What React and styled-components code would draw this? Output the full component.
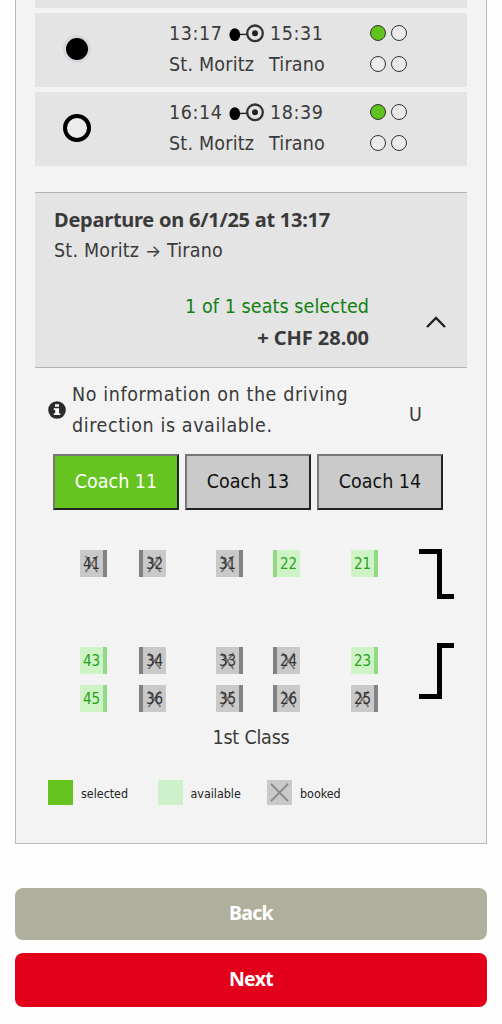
import { useState } from "react";
import styled, { createGlobalStyle } from "styled-components";

const connections = [
  { id: 1, from: "13:17", to: "15:31" },
  { id: 2, from: "16:14", to: "18:39" },
];

const coaches = ["Coach 11", "Coach 13", "Coach 14"];

const upperSeats = [
  { n: 41, back: "right" },
  { n: 32, back: "left" },
  { n: 31, back: "right" },
  { n: 22, back: "left", free: true },
  { n: 21, back: "right", free: true },
];

const lowerSeats = [
  { n: 43, back: "right", free: true },
  { n: 34, back: "left" },
  { n: 33, back: "right" },
  { n: 24, back: "left" },
  { n: 23, back: "right", free: true },
  { n: 45, back: "right", free: true },
  { n: 36, back: "left" },
  { n: 35, back: "right" },
  { n: 26, back: "left" },
  { n: 25, back: "right" },
];

function Route() {
  return (
    <RouteIcon viewBox="0 0 36 20">
      <path d="M6 10.4H18" stroke="#222" strokeWidth="1.4" />
      <ellipse cx="5.8" cy="10.7" rx="5.4" ry="6.4" fill="#000" />
      <circle cx="26" cy="9.3" r="7.8" fill="none" stroke="#333" strokeWidth="2.3" />
      <circle cx="26" cy="9.3" r="3" fill="#222" />
    </RouteIcon>
  );
}

function Cross() {
  return (
    <CrossIcon viewBox="0 0 20 20">
      <path d="M1 1L19 19M19 1L1 19" stroke="#858585" strokeWidth="1.8" />
    </CrossIcon>
  );
}

function Seats({ seats, lower }) {
  return (
    <SeatGrid $lower={lower}>
      {seats.map((seat) => (
        <Seat key={seat.n} $back={seat.back} $free={seat.free}>
          {!seat.free && (
            <SeatCross viewBox="0 0 14 18">
              <path d="M1 1L13 17M13 1L1 17" stroke="#777" strokeWidth="1.8" />
            </SeatCross>
          )}
          <SeatNumber>{seat.n}</SeatNumber>
        </Seat>
      ))}
    </SeatGrid>
  );
}

export default function App() {
  const [connection, setConnection] = useState(1);
  const [coach, setCoach] = useState("Coach 11");

  return (
    <Page>
      <GlobalStyle />
      <Panel>
        <Sliver />
        {connections.map((c) => (
          <Connection key={c.id} onClick={() => setConnection(c.id)}>
            <Radio $checked={connection === c.id} />
            <Times>
              <TimeLine>
                <Time>{c.from}</Time>
                <Route />
                <Time>{c.to}</Time>
              </TimeLine>
              <Stations>
                <Station>St. Moritz</Station>
                <Station>Tirano</Station>
              </Stations>
            </Times>
            <Occupancy>
              <Dot $full />
              <Dot />
              <Dot />
              <Dot />
            </Occupancy>
          </Connection>
        ))}

        <Departure>
          <Title>Departure on 6/1/25 at 13:17</Title>
          <Station>
            St. Moritz <Arrow>→</Arrow> Tirano
          </Station>
          <Summary>
            <Chosen>1 of 1 seats selected</Chosen>
            <Price>+ CHF 28.00</Price>
          </Summary>
          <Chevron viewBox="0 0 22 14">
            <path d="M2 12L11 3L20 12" fill="none" stroke="#222" strokeWidth="2.4" />
          </Chevron>
        </Departure>

        <Notice>
          <InfoIcon viewBox="0 0 18 18">
            <circle cx="9" cy="9" r="8.8" fill="#2b2b2b" />
            <path d="M7 3.2h4v2.6H7zM5.8 7.2H11v5h1.3V14H5.8v-1.8H7.2V9H5.8z" fill="#fff" />
          </InfoIcon>
          <NoticeText>
            No information on the driving
            <br />
            direction is available.
          </NoticeText>
          <span>U</span>
        </Notice>

        <Coaches>
          {coaches.map((name) => (
            <CoachButton key={name} $active={coach === name} onClick={() => setCoach(name)}>
              {name}
            </CoachButton>
          ))}
        </Coaches>

        <Deck>
          <Seats seats={upperSeats} />
          <Door viewBox="0 0 35 50" $height="50px">
            <path d="M0 2.5H20.5V47.5H35" fill="none" stroke="#000" strokeWidth="5" />
          </Door>
        </Deck>
        <Deck $lower>
          <Seats seats={lowerSeats} lower />
          <Door viewBox="0 0 35 56" $height="56px">
            <path d="M0 53.5H20.5V2.5H35" fill="none" stroke="#000" strokeWidth="5" />
          </Door>
        </Deck>
        <ClassName>1st Class</ClassName>

        <Legend>
          <Swatch $color="#67c420" />
          <LegendText>selected</LegendText>
          <Swatch $color="#cdf2c9" />
          <LegendText>available</LegendText>
          <Swatch $color="#c9c9c9">
            <Cross />
          </Swatch>
          <LegendText>booked</LegendText>
        </Legend>
      </Panel>

      <Action $color="#b0af9b" $height="52px">
        Back
      </Action>
      <Action $color="#e2001a" $height="54px">
        Next
      </Action>
    </Page>
  );
}

const GlobalStyle = createGlobalStyle`
  * {
    box-sizing: border-box;
  }
  body {
    margin: 0;
    background-color: #fefefe;
    color: #3a3a3a;
    font-family: "DejaVu Sans Condensed", "Noto Sans", sans-serif;
    font-size: 19.5px;
    letter-spacing: 0.6px;
    line-height: 30.6px;
  }
  button {
    font-family: inherit;
    letter-spacing: inherit;
    padding: 0;
    cursor: pointer;
  }
  svg {
    display: block;
    flex-shrink: 0;
  }
`;
const Page = styled.div`
  height: 1024px;
  padding: 0 15px;
  overflow: hidden;
  white-space: nowrap;
`;
const Panel = styled.div`
  height: 844px;
  margin-bottom: 44px;
  padding: 0 19px;
  background-color: #f3f3f3;
  border: 1px solid #b9b9b9;
  border-top: none;
`;
const Sliver = styled.div`
  height: 8px;
  margin-bottom: 5px;
  background-color: #e4e4e4;
`;
const Connection = styled.div`
  height: 74px;
  margin-bottom: 5px;
  padding-left: 28px;
  display: flex;
  background-color: #e4e4e4;
`;
const Radio = styled.span`
  width: 28px;
  height: 28px;
  margin: 21.5px 78px 0 0;
  border-radius: 50%;
  border: ${(p) => (p.$checked ? "3.5px solid #d5d9de" : "4px solid #000")};
  background-color: ${(p) => (p.$checked ? "#000" : "#ececec")};
`;
const Times = styled.div`
  width: 201px;
  padding-top: 6px;
`;
const TimeLine = styled.div`
  height: 30.5px;
  display: flex;
`;
const Time = styled.span`
  width: 60px;
`;
const RouteIcon = styled.svg`
  width: 36px;
  height: 20px;
  margin: 5px 5px 0 0;
`;
const Stations = styled.div`
  display: flex;
  justify-content: space-between;
  width: 156px;
`;
const Station = styled.span`
  letter-spacing: 0.2px;
`;
const Occupancy = styled.div`
  display: grid;
  grid-template-columns: 16px 16px;
  grid-auto-rows: 16px;
  gap: 14.5px 5px;
  padding-top: 12px;
`;
const Dot = styled.span`
  border: 1px solid #333;
  border-radius: 50%;
  background-color: ${(p) => (p.$full ? "#60c31e" : "#ebebeb")};
`;
const Departure = styled.section`
  height: 176px;
  margin-top: 26px;
  padding: 12px 19px 0;
  display: grid;
  grid-template-columns: 315px 1fr;
  grid-template-rows: 31px 31px 1fr;
  background-color: #e4e4e4;
  border-top: 1px solid #b5b5b5;
  border-bottom: 1px solid #b5b5b5;

  > span,
  > h2 {
    grid-column: 1 / -1;
  }
`;
const Title = styled.h2`
  margin: 0;
  font-family: "Noto Sans", sans-serif;
  font-size: 20px;
  font-weight: 700;
  letter-spacing: -0.25px;
  line-height: 29px;
`;
const Arrow = styled.span`
  font-family: "Inter", sans-serif;
  font-size: 17px;
  letter-spacing: 0;
`;
const Summary = styled.div`
  padding-top: 25px;
  display: flex;
  flex-direction: column;
  align-items: flex-end;
`;
const Chosen = styled.span`
  color: #118011;
  letter-spacing: 0.08px;
`;
const Price = styled.strong`
  font-family: "Noto Sans", sans-serif;
  font-size: 20px;
  letter-spacing: -0.05px;
  line-height: 29px;
`;
const Chevron = styled.svg`
  width: 22px;
  height: 14px;
  margin: 48px 0 0 56px;
`;
const Notice = styled.div`
  height: 86px;
  padding: 12px 0 0 13px;
  display: flex;

  > span:last-child {
    padding-top: 20px;
  }
`;
const InfoIcon = styled.svg`
  width: 18px;
  height: 18px;
  margin: 21px 6px 0 0;
`;
const NoticeText = styled.p`
  width: 337px;
  margin: 0;
`;
const Coaches = styled.div`
  padding-left: 18px;
  display: flex;
  gap: 6px;
`;
const CoachButton = styled.button`
  width: 126px;
  height: 56px;
  padding-bottom: 1px;
  border: 2px solid;
  border-color: #777 #222 #222 #777;
  background-color: ${(p) => (p.$active ? "#67c420" : "#cacaca")};
  color: ${(p) => (p.$active ? "#fff" : "#111")};
  font-size: 19.5px;
  letter-spacing: 0;
`;
const Deck = styled.div`
  padding-left: 45px;
  margin-top: ${(p) => (p.$lower ? "44px" : "39px")};
  display: flex;
`;
const SeatGrid = styled.div`
  width: 339px;
  padding-top: ${(p) => (p.$lower ? "4px" : "1px")};
  display: grid;
  grid-template-columns: 59px 77px 57px 78px 27px;
  grid-auto-rows: 27px;
  row-gap: 11px;
  align-content: start;
`;
const Seat = styled.div`
  position: relative;
  width: 27px;
  height: 27px;
  display: flex;
  align-items: flex-start;
  justify-content: center;
  background-color: ${(p) => (p.$free ? "#cdf3c7" : "#c9c9c9")};
  color: ${(p) => (p.$free ? "#25a216" : "#333")};
  border: 0 solid ${(p) => (p.$free ? "#92d985" : "#828282")};
  border-width: ${(p) => (p.$back === "left" ? "0 0 0 4px" : "0 4px 0 0")};
`;
const SeatNumber = styled.span`
  position: relative;
  font-size: 15px;
  letter-spacing: 0;
  line-height: 29px;
`;
const SeatCross = styled.svg`
  position: absolute;
  top: 5px;
  left: 4px;
  width: 15px;
  height: 18px;
`;
const Door = styled.svg`
  width: 35px;
  height: ${(p) => p.$height};
`;
const ClassName = styled.div`
  margin-top: 11px;
  text-align: center;
  letter-spacing: -0.2px;
`;
const Legend = styled.div`
  padding: 26px 0 0 13px;
  display: flex;
  align-items: center;
`;
const Swatch = styled.span`
  width: 25px;
  height: 25px;
  display: flex;
  align-items: center;
  justify-content: center;
  background-color: ${(p) => p.$color};
`;
const CrossIcon = styled.svg`
  width: 19px;
  height: 19px;
`;
const LegendText = styled.span`
  width: 76.5px;
  height: 25px;
  margin-left: 8px;
  color: #222;
  font-size: 12.4px;
  letter-spacing: 0;
  line-height: 27px;
`;
const Action = styled.button`
  width: 100%;
  height: ${(p) => p.$height};
  margin-bottom: 13px;
  padding-bottom: 3px;
  display: block;
  border: none;
  border-radius: 8px;
  background-color: ${(p) => p.$color};
  color: #fff;
  font-family: "Noto Sans", sans-serif;
  font-size: 19.5px;
  font-weight: 700;
  letter-spacing: -0.7px;
`;
